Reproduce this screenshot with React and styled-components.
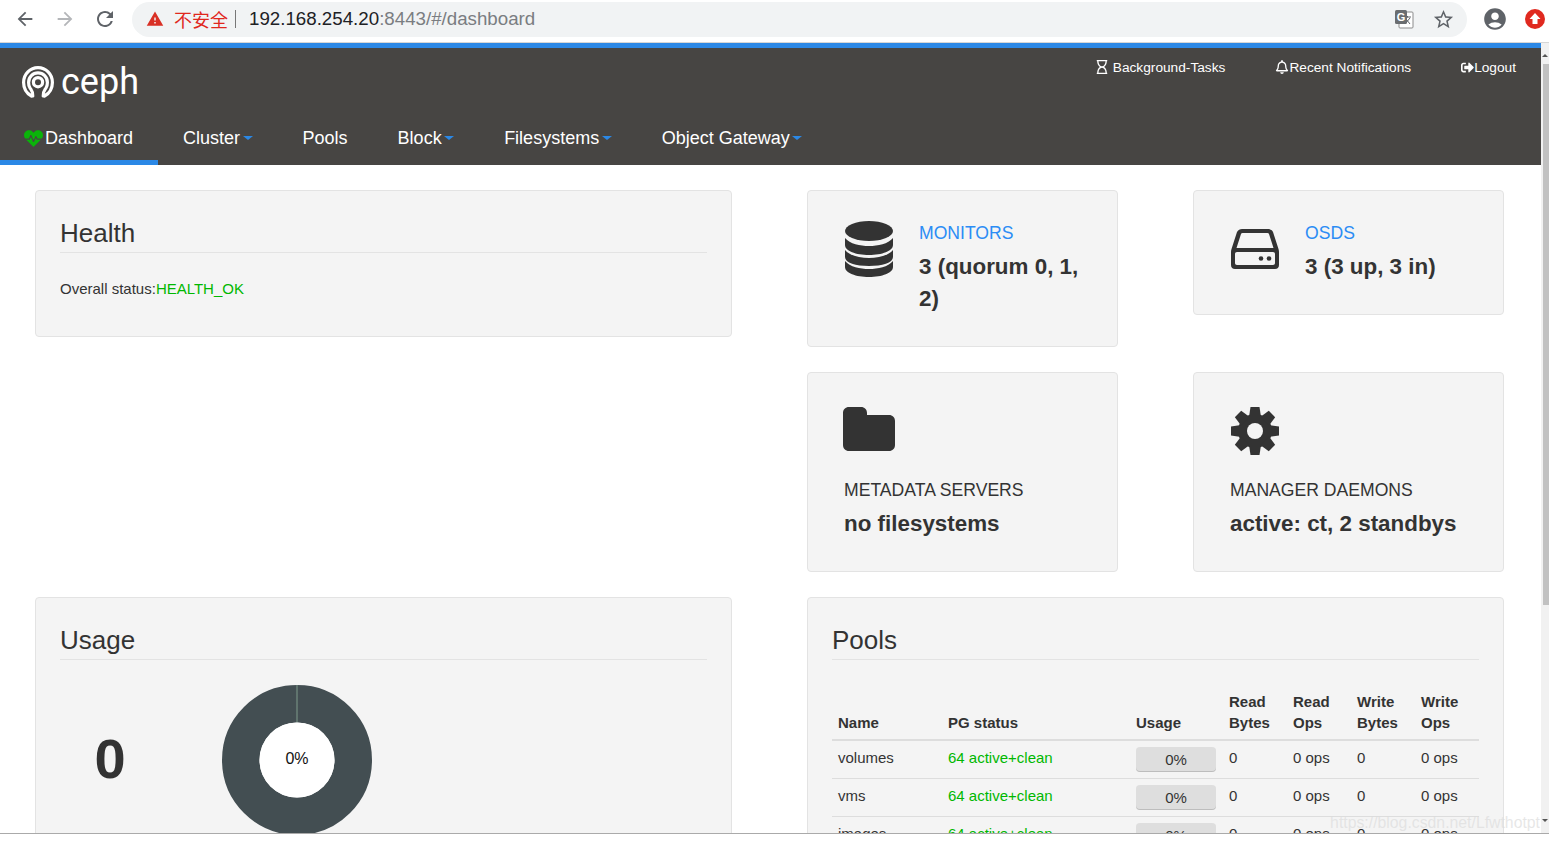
import React from "react";
import styled, { createGlobalStyle } from "styled-components";
import { FaHeartbeat, FaRegBell, FaRegHourglass, FaSignOutAlt } from "react-icons/fa";
import { MdAccountCircle, MdArrowBack, MdArrowForward, MdRefresh, MdStarBorder, MdWarning } from "react-icons/md";

const GlobalStyle = createGlobalStyle`
  html, body {
    margin: 0;
    padding: 0;
    background: #fff;
    font-family: "Liberation Sans", Arial, sans-serif;
    color: #333;
  }
  * {
    box-sizing: border-box;
  }
`;

const pools = ["volumes", "vms", "images"];

const CephLogo = () => (
  <LogoMark viewBox="0 0 32 32" fill="none" stroke="#fff" strokeLinecap="round">
    <path strokeWidth="3.2" d="M9.5 30 C4.5 27.2 1.6 21.8 1.6 16.4 C1.6 8 8.2 1.6 16 1.6 C23.8 1.6 30.4 8 30.4 16.4 C30.4 21.8 27.5 27.2 22.5 30" />
    <path strokeWidth="3.2" d="M10.8 30 C11.3 26 9.5 24.4 8 22 C6.9 20.3 6.6 18.2 6.6 16.4 C6.6 11 10.8 6.8 16 6.8 C21.2 6.8 25.4 11 25.4 16.4 C25.4 18.2 25.1 20.3 24 22 C22.5 24.4 20.7 26 21.2 30" />
    <circle strokeWidth="3.2" cx="16" cy="16.2" r="4.6" />
  </LogoMark>
);

const DatabaseIcon = () => (
  <StatSvg viewBox="0 0 48 56" $width={48} $height={56}>
    <ellipse cx="24" cy="10" rx="24" ry="10" />
    <path d="M0 17 C5 23 15 25 24 25 C33 25 43 23 48 17 V24 C48 30 37 34 24 34 C11 34 0 30 0 24 Z" />
    <path d="M0 29 C5 35 15 37 24 37 C33 37 43 35 48 29 V36 C48 42 37 45 24 45 C11 45 0 42 0 36 Z" />
    <path d="M0 40 C5 46 15 48 24 48 C33 48 43 46 48 40 V46 C48 52 37 56 24 56 C11 56 0 52 0 46 Z" />
  </StatSvg>
);

const DriveIcon = () => (
  <StatSvg viewBox="0 0 48 40" $width={48} $height={40} $top={8} $left={0}>
    <path
      fillRule="evenodd"
      d="M11 0 H37 C39 0 41 1 42 3 L47.5 20 C47.8 21 48 22 48 23 V36 C48 38.5 46.5 40 44 40 H4 C1.5 40 0 38.5 0 36 V23 C0 22 0.2 21 0.5 20 L6 3 C7 1 9 0 11 0 Z M11.5 4 C10.8 4 10.2 4.4 10 5 L5.5 19 C6 18.9 6.5 18.9 7 18.9 H41 C41.5 18.9 42 18.9 42.5 19 L38 5 C37.8 4.4 37.2 4 36.5 4 Z M6 23 C4.8 23 4 23.8 4 25 V34 C4 35.2 4.8 36 6 36 H42 C43.2 36 44 35.2 44 34 V25 C44 23.8 43.2 23 42 23 Z"
    />
    <circle cx="30" cy="29.5" r="2.3" />
    <circle cx="38" cy="29.5" r="2.3" />
  </StatSvg>
);

const FolderIcon = () => (
  <StatSvg viewBox="0 0 52 44" $width={52} $height={44} $left={-1}>
    <path d="M6 0 H18 C21.5 0 24 2.5 24 6 V8 H46 C49.5 8 52 10.5 52 14 V38 C52 41.5 49.5 44 46 44 H6 C2.5 44 0 41.5 0 38 V6 C0 2.5 2.5 0 6 0 Z" />
  </StatSvg>
);

const GearIcon = () => (
  <StatSvg viewBox="0 0 48 48" $width={48} $height={48} $left={1}>
    <circle cx="24" cy="24" r="17" />
    {[0, 45, 90, 135, 180, 225, 270, 315].map((angle) => (
      <path key={angle} d="M19.5 0 H28.5 L30 10 H18 Z" transform={`rotate(${angle} 24 24)`} />
    ))}
    <circle cx="24" cy="24" r="8" fill="#f4f4f4" />
  </StatSvg>
);

const TranslateIcon = () => (
  <svg width="20" height="20" viewBox="0 0 20 20">
    <rect x="5" y="3" width="14" height="16" rx="1" fill="#fff" stroke="#8b8b8b" />
    <path d="M10 8 H17 M13.5 7 V8.5 M11 15 L16 9 M12 10 L16 15" stroke="#5f6368" fill="none" />
    <rect x="1" y="1" width="12" height="14" rx="1.5" fill="#6a6d70" />
    <text x="7" y="12" textAnchor="middle" fontSize="11" fontWeight="700" fontFamily="Liberation Sans" fill="#fff">G</text>
  </svg>
);

const UpdateBadge = () => (
  <svg width="20" height="20" viewBox="0 0 20 20">
    <circle cx="10" cy="10" r="10" fill="#e0291f" />
    <path d="M10 4 L15.5 10 H12.5 V15 H7.5 V10 H4.5 Z" fill="#fff" />
  </svg>
);

const Donut = () => (
  <DonutBox>
    <svg width="150" height="150" viewBox="0 0 150 150">
      <circle cx="75" cy="75" r="56.25" fill="none" stroke="#434e52" strokeWidth="37.5" />
      <path d="M75 0 V37.5" stroke="#7f9a8a" strokeWidth="1" />
      <circle cx="75" cy="75" r="37.5" fill="#fff" />
    </svg>
    <DonutLabel>0%</DonutLabel>
  </DonutBox>
);

const Caret = styled.span`
  display: inline-block;
  width: 0;
  height: 0;
  margin-left: 2.5px;
  vertical-align: middle;
  border-top: 4px solid #2b88e6;
  border-left: 5px solid transparent;
  border-right: 5px solid transparent;
`;

const NavTab = ({ active, caret, icon, children }) => (
  <Tab $active={active}>
    {icon}
    {children}
    {caret && <Caret />}
  </Tab>
);

const StatCard = ({ icon, label, value, stacked, link }) => (
  <Card $stacked={stacked}>
    <StatIconSlot $stacked={stacked}>{icon}</StatIconSlot>
    <StatBody $stacked={stacked}>
      <StatLabel $link={link}>{label}</StatLabel>
      <StatValue>{value}</StatValue>
    </StatBody>
  </Card>
);

export default function App() {
  return (
    <Page>
      <GlobalStyle />
      <BrowserBar>
        <ChromeButton><MdArrowBack size={22} color="#5f6368" /></ChromeButton>
        <ChromeButton><MdArrowForward size={22} color="#b4b6b9" /></ChromeButton>
        <ChromeButton><MdRefresh size={24} color="#5f6368" /></ChromeButton>
        <AddressBar>
          <MdWarning size={18} color="#d93025" />
          <Insecure>不安全</Insecure>
          <AddressDivider />
          <Url>
            192.168.254.20<UrlRest>:8443/#/dashboard</UrlRest>
          </Url>
          <AddressTools>
            <TranslateIcon />
            <MdStarBorder size={23} color="#5f6368" />
          </AddressTools>
        </AddressBar>
        <ProfileSlot>
          <MdAccountCircle size={26} color="#5f6368" />
          <UpdateBadge />
        </ProfileSlot>
      </BrowserBar>

      <Viewport>
        <Main>
          <Header>
            <TopRow>
              <Logo>
                <CephLogo />
                <LogoText>ceph</LogoText>
              </Logo>
              <TopLinks>
                <TopLink><FaRegHourglass size={14} />&nbsp;Background-Tasks</TopLink>
                <TopLink><FaRegBell size={14} />Recent Notifications</TopLink>
                <TopLink><FaSignOutAlt size={13} />Logout</TopLink>
              </TopLinks>
            </TopRow>
            <NavRow>
              <NavTab active icon={<TabIcon><FaHeartbeat size={19} color="#0ab30a" /></TabIcon>}>Dashboard</NavTab>
              <NavTab caret>Cluster</NavTab>
              <NavTab>Pools</NavTab>
              <NavTab caret>Block</NavTab>
              <NavTab caret>Filesystems</NavTab>
              <NavTab caret>Object Gateway</NavTab>
            </NavRow>
          </Header>

          <Content>
            <HealthCard>
              <CardTitle>Health</CardTitle>
              <StatusLine>
                Overall status:<Ok>HEALTH_OK</Ok>
              </StatusLine>
            </HealthCard>

            <StatGrid>
              <StatCard link icon={<DatabaseIcon />} label="MONITORS" value="3 (quorum 0, 1, 2)" />
              <StatCard link icon={<DriveIcon />} label="OSDS" value="3 (3 up, 3 in)" />
              <StatCard stacked icon={<FolderIcon />} label="METADATA SERVERS" value="no filesystems" />
              <StatCard stacked icon={<GearIcon />} label="MANAGER DAEMONS" value="active: ct, 2 standbys" />
            </StatGrid>

            <TallCard>
              <CardTitle>Usage</CardTitle>
              <UsageRow>
                <BigNumber>0</BigNumber>
                <Donut />
              </UsageRow>
            </TallCard>

            <TallCard>
              <CardTitle>Pools</CardTitle>
              <PoolTable>
                <colgroup>
                  <PoolCol $width={110} />
                  <PoolCol $width={188} />
                  <PoolCol $width={93} />
                  <PoolCol $width={64} />
                  <PoolCol $width={64} />
                  <PoolCol $width={64} />
                  <PoolCol $width={64} />
                </colgroup>
                <thead>
                  <tr>
                    <Th>Name</Th>
                    <Th>PG status</Th>
                    <Th>Usage</Th>
                    <Th>Read Bytes</Th>
                    <Th>Read Ops</Th>
                    <Th>Write Bytes</Th>
                    <Th>Write Ops</Th>
                  </tr>
                </thead>
                <tbody>
                  {pools.map((pool) => (
                    <tr key={pool}>
                      <Td>{pool}</Td>
                      <Td><Ok>64 active+clean</Ok></Td>
                      <Td><UsageBar>0%</UsageBar></Td>
                      <Td>0</Td>
                      <Td>0 ops</Td>
                      <Td>0</Td>
                      <Td>0 ops</Td>
                    </tr>
                  ))}
                </tbody>
              </PoolTable>
            </TallCard>
          </Content>
        </Main>

        <ScrollRail>
          <ScrollArrow $up />
          <ScrollThumb />
          <ScrollArrow />
        </ScrollRail>
        <Watermark>https://blog.csdn.net/Lfwthotpt</Watermark>
      </Viewport>
      <BottomEdge />
    </Page>
  );
}

const Page = styled.div`
  display: flex;
  flex-direction: column;
  width: 1549px;
  height: 841px;
  overflow: hidden;
`;

const BrowserBar = styled.div`
  display: flex;
  align-items: center;
  flex: none;
  height: 43px;
  padding: 2px 0 6px 5px;
  background: #fff;
  border-bottom: 1px solid #d6d6d6;
`;

const ChromeButton = styled.span`
  display: flex;
  align-items: center;
  justify-content: center;
  width: 40px;
  height: 35px;
`;

const AddressBar = styled.div`
  display: flex;
  align-items: center;
  width: 1335px;
  height: 35px;
  margin-left: 7px;
  padding: 0 12px 0 14px;
  background: #f1f3f4;
  border-radius: 18px;
`;

const Insecure = styled.span`
  margin-left: 10px;
  color: #e0271d;
  font-size: 18px;
  font-family: "Noto Sans CJK SC", sans-serif;
`;

const AddressDivider = styled.span`
  width: 1px;
  height: 18px;
  margin: 0 13px 0 7px;
  background: #777;
`;

const Url = styled.span`
  color: #202124;
  font-size: 18.73px;
`;

const UrlRest = styled.span`
  color: #7a7d81;
`;

const AddressTools = styled.span`
  display: flex;
  align-items: center;
  gap: 18px;
  margin-left: auto;
`;

const ProfileSlot = styled.div`
  display: flex;
  align-items: center;
  gap: 17px;
  margin-left: 15px;
`;

const Viewport = styled.div`
  position: relative;
  display: flex;
  flex: none;
  height: 790px;
  overflow: hidden;
`;

const Main = styled.main`
  width: 1541px;
  height: 790px;
  overflow: hidden;
`;

const Header = styled.header`
  border-top: 5px solid #2b88e6;
  background: #474543;
`;

const TopRow = styled.div`
  display: flex;
  justify-content: space-between;
  height: 68px;
  padding: 0 25px 0 22px;
`;

const Logo = styled.div`
  display: flex;
  align-items: center;
  gap: 7px;
  height: 68px;
`;

const LogoMark = styled.svg`
  width: 32px;
  height: 32px;
`;

const LogoText = styled.span`
  color: #fff;
  font-family: Roboto, sans-serif;
  font-size: 36px;
  font-weight: 400;
  line-height: 36px;
`;

const TopLinks = styled.div`
  display: flex;
  gap: 50px;
  height: 38px;
  align-items: center;
`;

const TopLink = styled.span`
  display: flex;
  align-items: center;
  color: #fff;
  font-size: 13.7px;
`;

const NavRow = styled.nav`
  display: flex;
`;

const TabIcon = styled.span`
  display: flex;
  margin-right: 2px;
`;

const Tab = styled.span`
  display: flex;
  align-items: center;
  height: 49px;
  padding: 0 25px 0 ${(props) => (props.$active ? "24px" : "25px")};
  color: #fff;
  font-size: 18px;
  line-height: 22px;
  border-bottom: 5px solid ${(props) => (props.$active ? "#2b88e6" : "transparent")};
`;

const Content = styled.div`
  display: grid;
  grid-template-columns: 697px 697px;
  column-gap: 75px;
  row-gap: 25px;
  align-items: start;
  padding: 25px 0 0 35px;
`;

const Card = styled.section`
  display: flex;
  flex-direction: ${(props) => (props.$stacked ? "column" : "row")};
  min-height: ${(props) => (props.$stacked ? "200px" : "0")};
  padding: ${(props) => (props.$stacked ? "34px 36px 0" : "30px 36px 31px 37px")};
  background: #f4f4f4;
  border: 1px solid #e3e3e3;
  border-radius: 4px;
`;

const HealthCard = styled.section`
  height: 147px;
  padding: 24px;
  background: #f4f4f4;
  border: 1px solid #e3e3e3;
  border-radius: 4px;
`;

const TallCard = styled(HealthCard)`
  height: 300px;
`;

const CardTitle = styled.h2`
  margin: 0;
  padding: 1px 0 2px;
  color: #333;
  font-size: 26px;
  font-weight: 400;
  line-height: 34px;
  border-bottom: 1px solid #e3e3e3;
`;

const StatusLine = styled.p`
  margin: 26px 0 0;
  font-size: 15px;
  line-height: 20px;
`;

const Ok = styled.span`
  color: #00b800;
`;

const StatGrid = styled.div`
  display: grid;
  grid-template-columns: 311px 311px;
  column-gap: 75px;
  row-gap: 25px;
  align-items: start;
`;

const StatIconSlot = styled.div`
  flex: none;
  width: ${(props) => (props.$stacked ? "auto" : "74px")};
  height: ${(props) => (props.$stacked ? "48px" : "auto")};
  display: flex;
  align-items: flex-start;
`;

const StatBody = styled.div`
  margin-top: ${(props) => (props.$stacked ? "23px" : "0")};
`;

const StatSvg = styled.svg`
  display: block;
  width: ${(props) => props.$width}px;
  height: ${(props) => props.$height}px;
  margin-top: ${(props) => props.$top || 0}px;
  margin-left: ${(props) => props.$left || 0}px;
  fill: #333;
`;

const StatLabel = styled.div`
  color: ${(props) => (props.$link ? "#2b8cf5" : "#333")};
  font-size: 17.6px;
  line-height: 24px;
`;

const StatValue = styled.div`
  margin-top: 6px;
  color: #333;
  font-size: 22.4px;
  font-weight: 700;
  line-height: 32px;
`;

const UsageRow = styled.div`
  display: flex;
  margin-top: 25px;
`;

const BigNumber = styled.div`
  width: 100px;
  margin: 0 62px 0 0;
  text-align: center;
  font-size: 56px;
  font-weight: 700;
  line-height: 148px;
  color: #333;
`;

const DonutBox = styled.div`
  position: relative;
  width: 150px;
  height: 150px;
`;

const DonutLabel = styled.span`
  position: absolute;
  left: 0;
  right: 0;
  top: 64px;
  text-align: center;
  color: #111;
  font-size: 16px;
  line-height: 20px;
`;

const PoolTable = styled.table`
  width: 647px;
  margin-top: 20px;
  border-collapse: collapse;
  table-layout: fixed;
  font-size: 15px;
`;

const PoolCol = styled.col`
  width: ${(props) => props.$width}px;
`;

const Th = styled.th`
  padding: 11px 6px 6px;
  text-align: left;
  vertical-align: bottom;
  font-weight: 700;
  font-size: 15px;
  line-height: 21px;
  color: #333;
  border-bottom: 2px solid #ddd;
`;

const Td = styled.td`
  height: 38px;
  padding: 7px 6px 0;
  vertical-align: top;
  line-height: 20px;
  color: #333;
  border-bottom: 1px solid #ddd;
`;

const UsageBar = styled.div`
  width: 80px;
  height: 25px;
  margin-top: -1px;
  text-align: center;
  line-height: 25px;
  background: #dedede;
  border-radius: 4px;
  box-shadow: inset 0 -1px 0 rgba(0, 0, 0, 0.15);
`;

const ScrollRail = styled.div`
  display: flex;
  flex-direction: column;
  align-items: flex-end;
  flex: none;
  width: 8px;
  background: #f1f1f1;
`;

const ScrollArrow = styled.span`
  flex: none;
  width: 0;
  height: 0;
  margin: ${(props) => (props.$up ? "11px 1px 7px" : "auto 1px 11px")};
  border-left: 3px solid transparent;
  border-right: 3px solid transparent;
  border-bottom: ${(props) => (props.$up ? "3px solid #555" : "0")};
  border-top: ${(props) => (props.$up ? "0" : "3px solid #555")};
`;

const ScrollThumb = styled.span`
  width: 6px;
  height: 541px;
  background: #c1c1c1;
`;

const Watermark = styled.span`
  position: absolute;
  right: 9px;
  bottom: 0;
  color: rgba(220, 220, 220, 0.7);
  font-size: 15.8px;
  line-height: 20px;
`;

const BottomEdge = styled.div`
  flex: none;
  height: 8px;
  background: #fff;
  border-top: 1px solid #aaa;
`;
